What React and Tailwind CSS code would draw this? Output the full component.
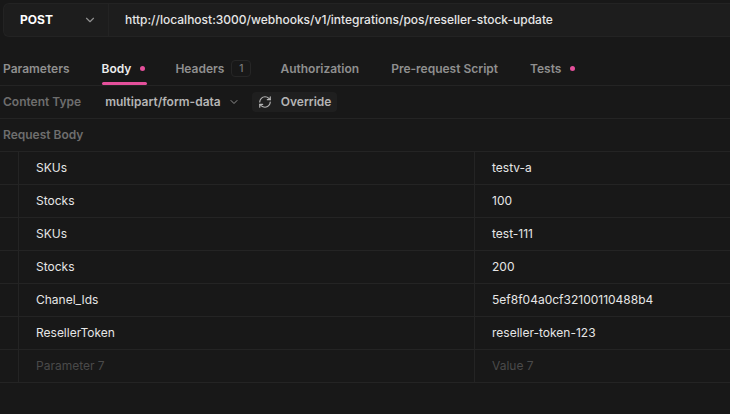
import React from 'react';
import { ChevronDown, RefreshCw } from 'lucide-react';

const rows = [
  { key: 'SKUs', value: 'testv-a' },
  { key: 'Stocks', value: '100' },
  { key: 'SKUs', value: 'test-111' },
  { key: 'Stocks', value: '200' },
  { key: 'Chanel_Ids', value: '5ef8f04a0cf32100110488b4' },
  { key: 'ResellerToken', value: 'reseller-token-123' },
];

function Tab({ label, active, dot, badge, className }) {
  return (
    <div className={`relative flex items-center h-full font-semibold ${className || ''}`}>
      <span className={active ? 'text-[#ececec]' : 'text-[#8f8f8f]'}>{label}</span>
      {dot && <span className="ml-[9px] w-[5px] h-[5px] rounded-full bg-[#e4509b]" />}
      {badge && (
        <span className="ml-[7px] w-[20px] h-[17px] flex items-center justify-center rounded border border-[#262626] text-[10px] font-medium text-[#7a7a7a]">
          {badge}
        </span>
      )}
      {active && <span className="absolute left-0 right-[-2px] bottom-0 h-[3px] rounded-full bg-[#e4509b]" />}
    </div>
  );
}

export default function App() {
  return (
    <div className="w-[730px] h-[414px] overflow-hidden bg-[#181818] text-[12px] font-['Inter',sans-serif] font-medium">
      <div className="pt-[3px] pl-[3px]">
        <div className="flex h-[34px] items-center rounded-l-md border border-r-0 border-[#232323] bg-[#1d1d1d]">
          <div className="flex items-center w-[105px] h-full border-r border-[#232323] pl-[16px]">
            <span className="font-bold text-white">POST</span>
            <ChevronDown className="ml-[30px] w-[14px] h-[14px] text-[#8f8f8f]" />
          </div>
          <div className="pl-[16px] text-[#e6e6e6]">
            http://localhost:3000/webhooks/v1/integrations/pos/reseller-stock-update
          </div>
        </div>
      </div>

      <div className="flex items-center h-[34px] mt-[15px] border-b border-[#242424] pl-[3px]">
        <Tab label="Parameters" />
        <Tab label="Body" active dot className="ml-[32px]" />
        <Tab label="Headers" badge="1" className="ml-[30px]" />
        <Tab label="Authorization" className="ml-[29px]" />
        <Tab label="Pre-request Script" className="ml-[32px]" />
        <Tab label="Tests" dot className="ml-[32px]" />
      </div>

      <div className="flex items-center h-[33px] border-b border-[#242424] pl-[3px]">
        <span className="text-[#6e6e6e] font-semibold">Content Type</span>
        <span className="ml-[24px] text-[#b5b5b5] font-semibold">multipart/form-data</span>
        <ChevronDown className="ml-[7px] w-[12px] h-[12px] text-[#8f8f8f]" />
        <div className="ml-[12px] flex items-center h-[20px] pl-[6px] pr-[6px] rounded bg-[#1f1f1f]">
          <RefreshCw className="w-[14px] h-[14px] text-[#b5b5b5]" />
          <span className="ml-[9px] text-[#b5b5b5] font-semibold">Override</span>
        </div>
      </div>

      <div className="flex items-center h-[33px] border-b border-[#242424] pl-[3px]">
        <span className="text-[#6e6e6e] font-semibold">Request Body</span>
      </div>

      <div>
        {rows.map((r, i) => (
          <div key={i} className="flex h-[33px] border-b border-[#242424]">
            <div className="w-[19px] border-r border-[#242424]" />
            <div className="w-[456px] flex items-center pl-[17px] border-r border-[#242424] text-[#e6e6e6] font-normal">
              {r.key}
            </div>
            <div className="flex-1 flex items-center pl-[17px] text-[#e6e6e6] font-normal">{r.value}</div>
          </div>
        ))}
        <div className="flex h-[33px] border-b border-[#242424]">
          <div className="w-[19px] border-r border-[#242424]" />
          <div className="w-[456px] flex items-center pl-[17px] border-r border-[#242424] text-[#4a4a4a] font-normal">
            Parameter 7
          </div>
          <div className="flex-1 flex items-center pl-[17px] text-[#4a4a4a] font-normal">Value 7</div>
        </div>
      </div>
    </div>
  );
}
